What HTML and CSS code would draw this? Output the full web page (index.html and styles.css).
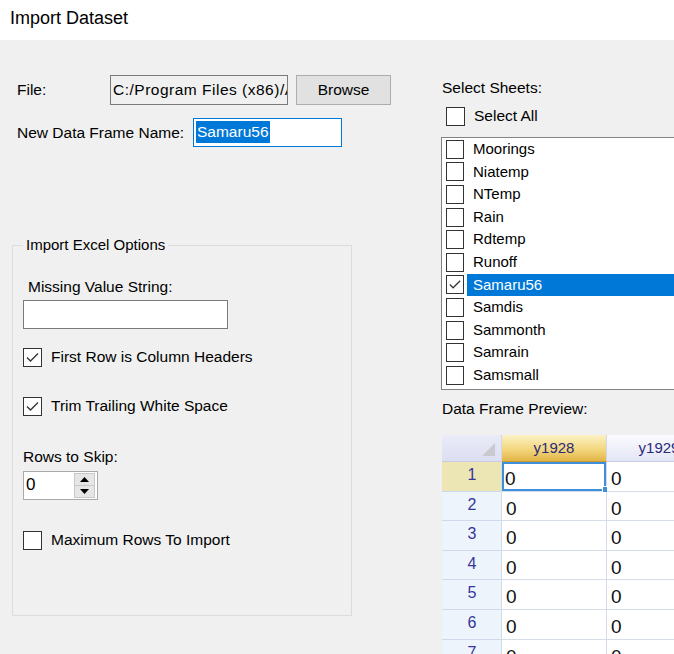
FILE: index.html
```html
<!DOCTYPE html>
<html>
<head>
<meta charset="utf-8">
<title>Import Dataset</title>
<link rel="stylesheet" href="styles.css">
</head>
<body>
<div class="titlebar">Import Dataset</div>
<div class="main">
  <div class="left">
    <div class="file-row">
      <span class="lbl file-lbl">File:</span>
      <div class="textbox file-box">C:/Program Files (x86)/Apps/RInstat/Library/Samaru.xlsx</div>
      <button class="btn">Browse</button>
    </div>
    <div class="name-row">
      <span class="lbl name-lbl">New Data Frame Name:</span>
      <div class="textbox name-box"><span class="sel">Samaru56</span></div>
    </div>
    <fieldset class="group">
      <legend>Import Excel Options</legend>
      <div class="lbl missing-lbl">Missing Value String:</div>
      <div class="textbox missing-box"></div>
      <div class="check check-first"><span class="box"><svg viewBox="0 0 17 17"><path d="M3 8.5 L6.5 12 L14 4.5"/></svg></span><span>First Row is Column Headers</span></div>
      <div class="check check-trim"><span class="box"><svg viewBox="0 0 17 17"><path d="M3 8.5 L6.5 12 L14 4.5"/></svg></span><span>Trim Trailing White Space</span></div>
      <div class="lbl skip-lbl">Rows to Skip:</div>
      <div class="spin">
        <span class="spin-val">0</span>
        <div class="spin-btns">
          <span class="spin-btn"><svg viewBox="0 0 9 5"><path d="M0 5 L4.5 0 L9 5 Z"/></svg></span>
          <span class="spin-btn"><svg viewBox="0 0 9 5"><path d="M0 0 L9 0 L4.5 5 Z"/></svg></span>
        </div>
      </div>
      <div class="check check-max"><span class="box"></span><span>Maximum Rows To Import</span></div>
    </fieldset>
  </div>
  <div class="right">
    <div class="lbl sheets-lbl">Select Sheets:</div>
    <div class="check select-all"><span class="box"></span><span>Select All</span></div>
    <div class="sheet-list">
      <div class="item"><span class="box"></span><span class="name">Moorings</span></div>
      <div class="item"><span class="box"></span><span class="name">Niatemp</span></div>
      <div class="item"><span class="box"></span><span class="name">NTemp</span></div>
      <div class="item"><span class="box"></span><span class="name">Rain</span></div>
      <div class="item"><span class="box"></span><span class="name">Rdtemp</span></div>
      <div class="item"><span class="box"></span><span class="name">Runoff</span></div>
      <div class="item selected"><span class="box"><svg viewBox="0 0 17 17"><path d="M3 8.5 L6.5 12 L14 4.5"/></svg></span><span class="name">Samaru56</span></div>
      <div class="item"><span class="box"></span><span class="name">Samdis</span></div>
      <div class="item"><span class="box"></span><span class="name">Sammonth</span></div>
      <div class="item"><span class="box"></span><span class="name">Samrain</span></div>
      <div class="item"><span class="box"></span><span class="name">Samsmall</span></div>
    </div>
    <div class="lbl preview-lbl">Data Frame Preview:</div>
    <div class="grid">
      <div class="corner"><svg viewBox="0 0 13 13"><path d="M13 0 L13 13 L0 13 Z"/></svg></div>
      <div class="colhead active">y1928</div>
      <div class="colhead">y1929</div>

      <div class="rowhead active">1</div><div class="cell current">0</div><div class="cell">0</div>
      <div class="rowhead">2</div><div class="cell">0</div><div class="cell">0</div>
      <div class="rowhead">3</div><div class="cell">0</div><div class="cell">0</div>
      <div class="rowhead">4</div><div class="cell">0</div><div class="cell">0</div>
      <div class="rowhead">5</div><div class="cell">0</div><div class="cell">0</div>
      <div class="rowhead">6</div><div class="cell">0</div><div class="cell">0</div>
      <div class="rowhead">7</div><div class="cell">0</div><div class="cell">0</div>
    </div>
  </div>
</div>
</body>
</html>
```

FILE: styles.css
```css
* { box-sizing: border-box; }

html, body {
  margin: 0;
  padding: 0;
}

body {
  width: 674px;
  height: 654px;
  overflow: hidden;
  background: #f0f0f0;
  font-family: "Liberation Sans", Arial, sans-serif;
  font-size: 15.5px;
  color: #000;
}

.titlebar {
  height: 40px;
  background: #fff;
  padding-left: 10px;
  font-size: 18px;
  line-height: 36px;
  color: #000;
}

.main {
  display: flex;
  align-items: flex-start;
}

.left {
  flex: none;
  width: 441px;
}

.right {
  flex: none;
  width: 320px;
}

.lbl {
  line-height: 20px;
  white-space: nowrap;
}

/* File row */
.file-row {
  display: flex;
  align-items: center;
  margin-top: 35px;
  padding-left: 17px;
  height: 30px;
}

.file-lbl { width: 93px; }

.textbox {
  border: 1px solid #7a7a7a;
  background: #fff;
  white-space: nowrap;
  overflow: hidden;
}

.file-box {
  width: 178px;
  height: 30px;
  background: #f0f0f0;
  padding-left: 2px;
  line-height: 28px;
  letter-spacing: 0.5px;
}

.btn {
  margin-left: 8px;
  width: 95px;
  height: 30px;
  background: #e1e1e1;
  border: 1px solid #adadad;
  font-family: inherit;
  font-size: 15.5px;
  color: #000;
  padding: 0;
}

/* Name row */
.name-row {
  display: flex;
  align-items: center;
  margin-top: 13px;
  padding-left: 17px;
  height: 29px;
}

.name-lbl { width: 176px; }

.name-box {
  width: 149px;
  height: 29px;
  border-color: #0078d7;
  padding-left: 2px;
  padding-top: 2px;
}

.sel {
  display: inline-block;
  background: #0078d7;
  color: #fff;
  line-height: 22px;
  padding: 0 1px;
}

/* Group box */
.group {
  margin: 88px 0 0 12px;
  width: 340px;
  border: 1px solid #dcdcdc;
  padding: 0 10px 65px 10px;
  min-width: 0;
}

.group legend {
  padding: 0 3px;
  margin-left: 0;
  line-height: 20px;
  font-size: 15px;
}

.missing-lbl {
  margin-top: 22px;
  padding-left: 5px;
}

.missing-box {
  margin-top: 3px;
  width: 205px;
  height: 29px;
  border-color: #7a7a7a;
}

.check {
  display: flex;
  align-items: center;
  height: 20px;
  gap: 9px;
  white-space: nowrap;
}

.box {
  flex: none;
  width: 19px;
  height: 19px;
  border: 1px solid #333;
  background: #fff;
  display: flex;
  align-items: center;
  justify-content: center;
}

.box svg {
  width: 17px;
  height: 17px;
}

.box svg path {
  fill: none;
  stroke: #333;
  stroke-width: 1.3;
}

.check-first { margin-top: 18px; }
.check-trim { margin-top: 29px; }

.skip-lbl { margin-top: 31px; }

.spin {
  margin-top: 4px;
  width: 75px;
  height: 29px;
  border: 1px solid #a9a9a9;
  background: #fff;
  display: flex;
  align-items: flex-start;
}

.spin-val {
  width: 50px;
  padding-left: 2px;
  line-height: 25px;
  font-size: 17px;
}

.spin-btns {
  margin-top: 1px;
  width: 21px;
  height: 25px;
  display: flex;
  flex-direction: column;
  border: 1px solid #c8c8c8;
}

.spin-btn {
  flex: 1;
  background: #e6e6e6;
  display: flex;
  align-items: center;
  justify-content: center;
}

.spin-btn + .spin-btn { border-top: 1px solid #c8c8c8; }

.spin-btn svg {
  width: 9px;
  height: 5px;
}

.spin-btn svg path { fill: #000; }

.check-max { margin-top: 30px; }

/* Right column */
.sheets-lbl {
  margin-top: 38px;
  padding-left: 1px;
}

.select-all {
  margin-top: 8px;
  padding-left: 5px;
}

.sheet-list {
  margin-top: 11px;
  width: 300px;
  height: 253px;
  border: 1px solid #828282;
  background: #fff;
  padding: 0 0 0 4px;
  font-size: 15px;
}

.item {
  display: flex;
  align-items: center;
  height: 22.6px;
}

.item .box {
  width: 18px;
  height: 19px;
  margin-right: 3px;
}

.item .name {
  flex: 1;
  height: 22.6px;
  line-height: 22.6px;
  padding-left: 6px;
}

.item.selected .name {
  background: #0078d7;
  color: #fff;
}

.preview-lbl {
  margin-top: 9px;
  padding-left: 1px;
}

/* Grid */
.grid {
  margin: 16px 0 0 1px;
  display: grid;
  grid-template-columns: 60px 105px 105px;
  grid-template-rows: 27px;
  grid-auto-rows: 29.6px;
}

.corner {
  background: linear-gradient(#e9ebf8, #dcdff1);
  border-right: 1px solid #d2d6e8;
  border-bottom: 1px solid #c8cde3;
  display: flex;
  justify-content: flex-end;
  align-items: flex-end;
  padding: 0 6px 5px 0;
}

.corner svg {
  width: 13px;
  height: 13px;
}

.corner svg path { fill: #c9c9d0; }

.colhead {
  background: linear-gradient(#fbfbff, #e3e6f5);
  border-right: 1px solid #d2d6e8;
  border-bottom: 1px solid #c8cde3;
  color: #2b2a78;
  font-size: 15px;
  text-align: center;
  line-height: 26px;
}

.colhead.active {
  background: linear-gradient(#fbf1c4, #f3d77f 55%, #e2b446);
  border-bottom-color: #c99a2e;
}

.rowhead {
  background: #edf4fc;
  border-right: 1px solid #d2dbe8;
  border-bottom: 1px solid #cdd8e8;
  color: #36369a;
  text-align: center;
  line-height: 26px;
  font-size: 16px;
  padding-left: 1px;
}

.rowhead.active {
  background: #ece5b4;
}

.cell {
  position: relative;
  background: #fff;
  border-right: 1px solid #d6dde9;
  border-bottom: 1px solid #d6dde9;
  font-size: 19px;
  line-height: 34px;
  padding-left: 4px;
  color: #111;
  overflow: hidden;
}

.cell.current {
  box-shadow: inset 0 0 0 2px #3d8fdc;
  padding-left: 3px;
  overflow: visible;
}

.cell.current::after {
  content: "";
  position: absolute;
  right: -3px;
  bottom: -2px;
  width: 5px;
  height: 5px;
  background: #3d8fdc;
  border: 1px solid #fff;
}
```
